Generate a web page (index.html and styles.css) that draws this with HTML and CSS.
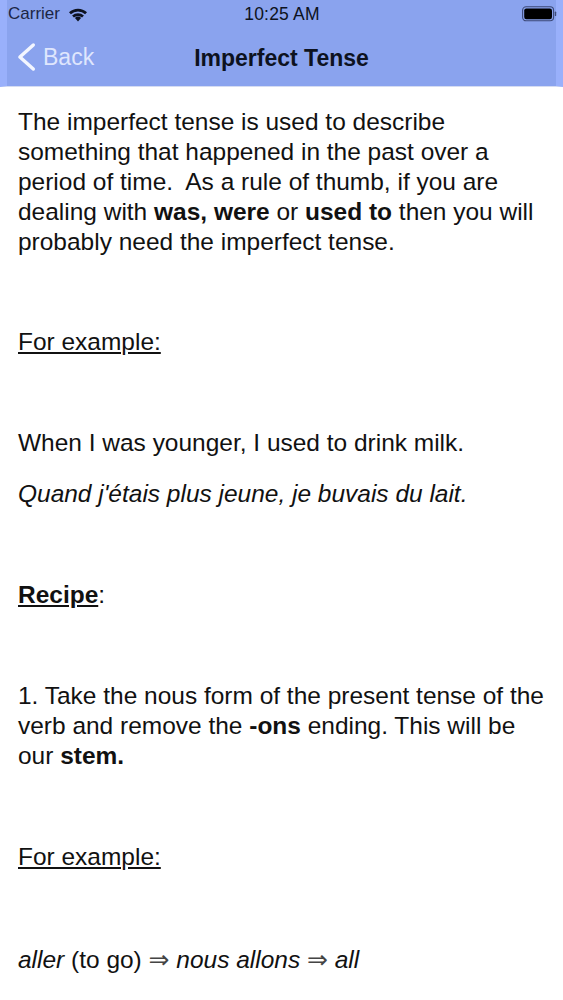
FILE: index.html
```html
<!DOCTYPE html>
<html lang="en">
<head>
<meta charset="utf-8">
<title>Imperfect Tense</title>
<link rel="stylesheet" href="styles.css">
</head>
<body>
<header class="header">
  <div class="status">
    <div class="status-left">
      <span>Carrier</span>
      <svg class="wifi" viewBox="0 0 20 15" width="20" height="15"><path d="M10 14.5 6.9 11a4.6 4.6 0 0 1 6.2 0L10 14.5Z"/><path d="M1 5.2a13.2 13.2 0 0 1 18 0l-1.9 2.1a10.4 10.4 0 0 0-14.2 0L1 5.2Z"/><path d="M4.1 8.6a8.6 8.6 0 0 1 11.8 0l-1.8 2a6 6 0 0 0-8.2 0l-1.8-2Z"/></svg>
    </div>
    <div class="status-time">10:25 AM</div>
    <div class="status-right">
      <svg class="battery" viewBox="0 0 35 16" width="35" height="16"><rect x="0.6" y="0.8" width="31" height="14" rx="3.5" fill="none" stroke="#3d4a78" stroke-width="1.1"/><rect x="2.2" y="2.4" width="27.8" height="10.8" rx="2.2" fill="#000"/><rect x="32.8" y="5.5" width="1.4" height="4.6" rx="0.7" fill="#3d4a78"/></svg>
    </div>
  </div>
  <div class="nav">
    <a class="back">
      <svg class="chevron" viewBox="0 0 20 30" width="20" height="30"><path d="M16.3 3 2.9 15l13.4 12" fill="none" stroke="#f3f6ff" stroke-width="3.4" stroke-linecap="round" stroke-linejoin="round"/></svg>
      <span>Back</span>
    </a>
    <h1 class="title">Imperfect Tense</h1>
  </div>
</header>
<main class="content">
  <p class="intro">The imperfect tense is used to describe something that happened in the past over a period of time.&nbsp; As a rule of thumb, if you are dealing with <b>was, were</b> or <b>used to</b> then you will probably need the imperfect tense.</p>
  <p class="first"><u>For example:</u></p>
  <p class="gap">When I was younger, I used to drink milk.</p>
  <p class="near"><i>Quand j'étais plus jeune, je buvais du lait.</i></p>
  <p class="gap"><u><b>Recipe</b></u>:</p>
  <p class="gap">1. Take the nous form of the present tense of the verb and remove the <b>-ons</b> ending. This will be our <b>stem.</b></p>
  <p class="gap"><u>For example:</u></p>
  <p class="last"><i>aller</i> (to go) <span class="arrow">⇒</span> <i>nous allons</i> <span class="arrow">⇒</span> <i>all</i></p>
</main>
</body>
</html>
```
FILE: styles.css
```css
* { box-sizing: border-box; }
html, body { margin: 0; padding: 0; background: #fff; }
body {
  width: 563px;
  height: 1000px;
  overflow: hidden;
  font-family: "Liberation Sans", Arial, sans-serif;
  color: #111;
}
.header {
  height: 87px;
  background: #8aa3ee;
  border-left: 7px solid #99b0fb;
  border-right: 7px solid #99b0fb;
  border-bottom: 1px solid #d5dcf2;
  color: #0d1220;
}
.status {
  height: 28px;
  padding: 0 0 0 1px;
  display: grid;
  grid-template-columns: 1fr auto 1fr;
  align-items: center;
  font-size: 17px;
}
.status-left { display: flex; align-items: center; gap: 8px; color: #1c2645; }
.wifi { fill: #0d1220; display: block; }
.status-time { font-size: 17.5px; letter-spacing: 0.2px; }
.status-right { display: flex; justify-content: flex-end; }
.battery { display: block; position: relative; left: 1px; }
.nav {
  height: 58px;
  position: relative;
  display: flex;
  align-items: center;
  justify-content: center;
}
.back {
  position: absolute;
  left: 10px;
  top: 14px;
  display: flex;
  align-items: center;
  gap: 6px;
  font-size: 23px;
  color: #dfe6fd;
}
.chevron { display: block; }
.title {
  margin: 0;
  font-size: 23px;
  font-weight: 700;
  position: relative;
  top: 1px;
}
.content {
  padding: 20px 18px 0;
  font-size: 24.47px;
  line-height: 30px;
}
p { margin: 0; }
.first { margin-top: 70px; }
.gap { margin-top: 71px; }
.near { margin-top: 21px; }
.last { margin-top: 73px; }
.arrow { color: #444; font-family: "DejaVu Sans", sans-serif; font-size: 25px; line-height: 1; }
```
